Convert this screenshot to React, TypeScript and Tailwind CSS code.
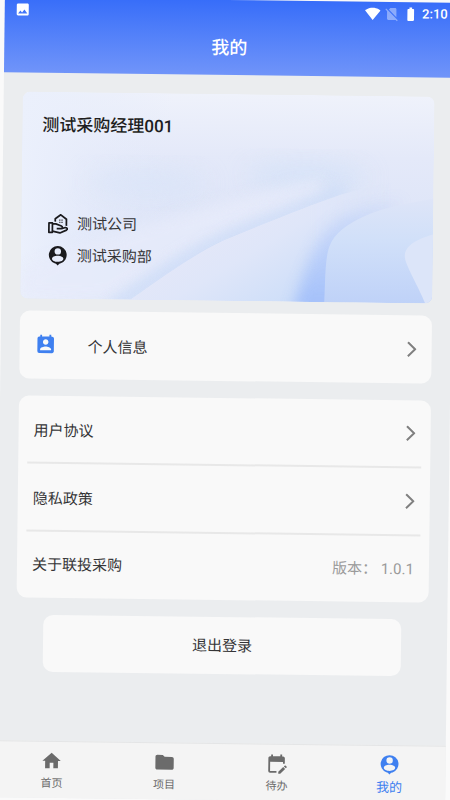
import React from 'react';
import {
  MdBatteryFull, MdEditCalendar, MdFolder, MdHome, MdImage, MdNoSim,
  MdPermContactCalendar, MdSignalWifi4Bar,
} from 'react-icons/md';

const PersonPinIcon: React.FC<{ className?: string }> = ({ className }) => (
  <svg viewBox="0 0 24 24" className={className} fill="currentColor" aria-hidden="true">
    <path
      fillRule="evenodd"
      d="M12 1.2a9.7 9.7 0 0 0-3.4 18.800l1.600.5 1.800 1.800 1.800-1.800 1.600-.5A9.700 9.700 0 0 0 12 1.200Zm0 2.300a3.500 3.500 0 1 1 0 7 3.500 3.500 0 0 1 0-7Zm0 8.300c3.300 0 6.200 1.400 6.200 3.200 0 1.900-2.800 3.400-6.200 3.400s-6.200-1.500-6.200-3.400c0-1.800 2.900-3.200 6.200-3.200Z"
    />
  </svg>
);

const HouseHandIcon: React.FC<{ className?: string }> = ({ className }) => (
  <svg viewBox="0 0 24 24" className={className} fill="none" stroke="currentColor" strokeWidth="1.9" strokeLinejoin="round" aria-hidden="true">
    <path d="M8.800 9.500V6.400L14.800 2 21 6.800V14" />
    <path d="M2 11H5.800V21.200H2Z" />
    <path d="M5.800 12H9.500L15.600 14.200C17.200 14.900 17 17 15.400 17H10.500" />
    <path d="M15.800 17L20 15.800C22.200 15.600 22.600 17.800 21.200 18.600L14 21.800 5.800 20" />
    <path d="M13.200 7.800H14.400M15.600 7.800H16.800M13.200 10.200H14.400M15.600 10.200H16.800" strokeWidth="1.2" />
  </svg>
);

const ChevronIcon = () => (
  <svg viewBox="0 0 10 16" className="h-4 w-[10px] text-[#808080]" fill="none" stroke="currentColor" strokeWidth="2" aria-hidden="true">
    <path d="M1.3 1 8.5 8 1.3 15" />
  </svg>
);

const CardArt = () => (
  <svg viewBox="0 0 412 207" preserveAspectRatio="none" className="absolute inset-0 h-full w-full" aria-hidden="true">
    <defs>
      <linearGradient id="base" x1="0" y1="0" x2="0" y2="1">
        <stop offset="0%" stopColor="#eff2fb" />
        <stop offset="30%" stopColor="#e4e9f9" />
        <stop offset="60%" stopColor="#dee5f8" />
        <stop offset="100%" stopColor="#dde5f9" />
      </linearGradient>
      <linearGradient id="leftFade" x1="0" y1="0" x2="1" y2="0">
        <stop offset="0%" stopColor="#ebf0fc" />
        <stop offset="100%" stopColor="#e5ebfa" stopOpacity="0" />
      </linearGradient>
      <linearGradient id="wave" gradientUnits="userSpaceOnUse" x1="210" y1="130" x2="262" y2="215">
        <stop offset="0%" stopColor="#e3e7f8" />
        <stop offset="35%" stopColor="#dfe6f9" />
        <stop offset="100%" stopColor="#cddef9" />
      </linearGradient>
      <linearGradient id="waveFade" gradientUnits="userSpaceOnUse" x1="0" y1="0" x2="412" y2="0">
        <stop offset="70%" stopColor="#fff" />
        <stop offset="90%" stopColor="#fff" stopOpacity="0" />
      </linearGradient>
      <linearGradient id="fold" x1="0" y1="0" x2="0" y2="1">
        <stop offset="0%" stopColor="#dee5f8" />
        <stop offset="40%" stopColor="#d1e0f9" />
        <stop offset="100%" stopColor="#bfd2f8" />
      </linearGradient>
      <linearGradient id="foldShade" gradientUnits="userSpaceOnUse" x1="0" y1="100" x2="0" y2="207">
        <stop offset="0%" stopColor="#b4cbfa" stopOpacity="0.3" />
        <stop offset="100%" stopColor="#9dbbfa" />
      </linearGradient>
      <mask id="waveMask">
        <rect width="412" height="207" fill="url(#waveFade)" />
      </mask>
      <clipPath id="aboveWave">
        <path d="M0 0H412V82C380 84 350 90 320 99C290 110 250 126 204 146C180 157 150 178 110 207H0Z" />
      </clipPath>
      <filter id="soft" x="-50%" y="-50%" width="200%" height="200%">
        <feGaussianBlur stdDeviation="12" />
      </filter>
      <filter id="shade" filterUnits="userSpaceOnUse" x="-40" y="-40" width="500" height="300">
        <feGaussianBlur stdDeviation="7" />
      </filter>
    </defs>
    <rect width="412" height="207" fill="url(#base)" />
    <rect width="150" height="207" fill="url(#leftFade)" />
    <ellipse cx="125" cy="90" rx="60" ry="14" fill="#d7e3f8" opacity="0.6" filter="url(#soft)" />
    <ellipse cx="285" cy="82" rx="60" ry="14" fill="#d1e1f8" opacity="0.7" filter="url(#soft)" />
    <path d="M0 180C60 150 150 122 210 106L300 84V100L204 140L90 207H0Z" fill="#e7ebfa" opacity="0.8" filter="url(#shade)" />
    <g clipPath="url(#aboveWave)">
      <path d="M90 218C150 174 180 156 204 146C250 126 290 110 325 96" fill="none" stroke="#c8daf8" strokeWidth="14" opacity="0.7" filter="url(#shade)" />
    </g>
    <path
      d="M110 207C150 178 180 157 204 146C250 126 290 110 320 99C350 90 380 84 412 82V207Z"
      fill="url(#wave)"
      mask="url(#waveMask)"
    />
    <path d="M272 220C285 170 294 140 320 122C340 112 362 108 384 104L345 130L318 220Z" fill="url(#foldShade)" opacity="0.85" filter="url(#shade)" />
    <path d="M304 207C305 185 304 162 309 150C313 139 325 129 342 121C365 110 390 107 412 102V207Z" fill="url(#fold)" />
    <path d="M412 138C392 144 384 151 384 160C384 168 398 190 405 207H412Z" fill="#dce5f9" />
  </svg>
);

const StatusBar = () => (
  <div className="flex h-6 items-center justify-between pl-[10px] pr-[7px] text-white">
    <MdImage className="h-4 w-4" />
    <div className="flex items-center gap-[3px]">
      <MdSignalWifi4Bar className="h-4 w-4" />
      <MdNoSim className="h-4 w-4 opacity-40" />
      <MdBatteryFull className="h-4 w-4" />
      <span className="font-[Roboto,sans-serif] text-[13px] font-medium leading-4">2:10</span>
    </div>
  </div>
);

const LinkRow: React.FC<{ label: string }> = ({ label }) => (
  <button type="button" className="flex h-[68px] w-full items-center justify-between px-[6px]">
    <span className="pt-1">{label}</span>
    <ChevronIcon />
  </button>
);

const tabs = [
  { label: '首页', icon: MdHome },
  { label: '项目', icon: MdFolder },
  { label: '待办', icon: MdEditCalendar },
  { label: '我的', icon: PersonPinIcon, active: true },
];

export default function App() {
  return (
    <div className="min-h-screen overflow-hidden bg-[#fafafa] font-[Roboto,'Noto_Sans_CJK_SC',sans-serif] text-[15px] leading-6 text-[#353537]">
      <div className="flex min-h-screen rotate-[0.7deg] flex-col bg-[#ebedef]">
        <header className="h-[75px] bg-linear-to-b from-[#376df9] to-[#7094f9]">
          <StatusBar />
          <h1 className="pt-3 text-center text-lg font-medium leading-6 text-white">我的</h1>
        </header>

        <main className="flex-1 px-[19px] pt-[19px]">
          <section className="relative h-[207px] overflow-hidden rounded-lg">
            <CardArt />
            <div className="relative flex h-full flex-col justify-between px-5 pb-[31px] pt-[21px]">
              <h2 className="text-[17px] font-medium leading-6 text-[#1d1d20]">测试采购经理001</h2>
              <div className="flex flex-col gap-2 pl-[6px]">
                <p className="flex items-center gap-2">
                  <HouseHandIcon className="h-[22px] w-[22px] text-[#1b1b1e]" />
                  测试公司
                </p>
                <p className="flex items-center gap-2">
                  <PersonPinIcon className="h-[22px] w-[22px] text-[#1b1b1e]" />
                  测试采购部
                </p>
              </div>
            </div>
          </section>

          <button type="button" className="mt-3 flex h-[68px] w-full items-center rounded-[10px] bg-[#f9f9f9] px-[15px] text-left">
            <MdPermContactCalendar className="h-[22px] w-[22px] text-[#3f80f0]" />
            <span className="ml-[31px] flex-1 pt-1">个人信息</span>
            <ChevronIcon />
          </button>

          <section className="mt-[17px] divide-y-2 divide-[#e8e8e8] rounded-[10px] bg-[#f9f9f9] px-[9px]">
            <LinkRow label="用户协议" />
            <LinkRow label="隐私政策" />
            <div className="flex h-[66px] items-center justify-between px-[6px]">
              <span>关于联投采购</span>
              <span className="text-[#9b9b9b]">版本： 1.0.1</span>
            </div>
          </section>

          <div className="px-[27px] pt-[17px]">
            <button type="button" className="h-[57px] w-full rounded-[10px] bg-[#f9f9f9]">退出登录</button>
          </div>
        </main>

        <nav className="flex h-[57px] border-t border-[#e4e5e6] bg-[#f4f4f4]">
          {tabs.map(({ label, icon: Icon, active }) => (
            <a
              key={label}
              href="#"
              aria-current={active ? 'page' : undefined}
              className={`flex flex-1 flex-col items-center pt-2 ${active ? 'text-[13px] text-[#3f80f0]' : 'text-[11px] text-[#6b6b6b]'}`}
            >
              <Icon className="h-[22px] w-[22px]" />
              <span className="leading-6">{label}</span>
            </a>
          ))}
        </nav>
      </div>
    </div>
  );
}
